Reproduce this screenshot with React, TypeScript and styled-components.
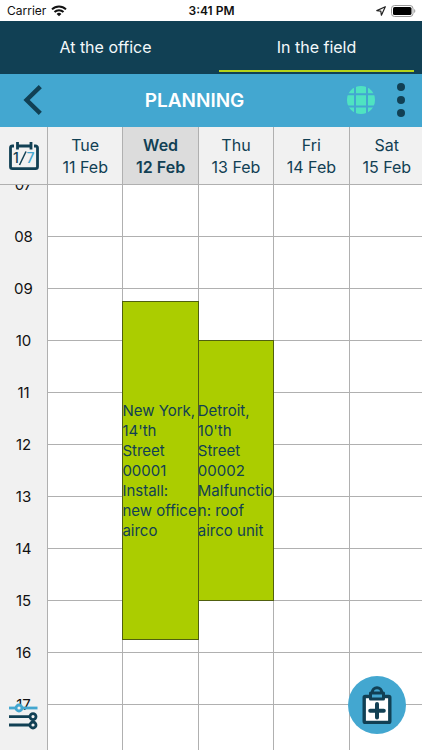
import React from "react";
import styled, { createGlobalStyle } from "styled-components";

const navy = "#114054";
const blue = "#43a7d0";
const lime = "#abcd00";
const mint = "#4fe3c1";
const line = "#b0b0b0";
const panel = "#f1f1f1";

const Global = createGlobalStyle`
  *, *::before, *::after { box-sizing: border-box; }
  body { margin: 0; font-family: Inter, "Liberation Sans", sans-serif; color: ${navy}; }
  button { border: 0; padding: 0; margin: 0; background: none; font: inherit; color: inherit; cursor: pointer; }
  svg { display: block; }
`;

const Screen = styled.div`
  position: relative;
  display: flex;
  flex-direction: column;
  height: 100vh;
  overflow: hidden;
  background: #fff;
`;

const StatusBar = styled.div`
  display: grid;
  grid-template-columns: 1fr auto 1fr;
  align-items: center;
  flex: none;
  height: 21px;
  padding: 0 6px 0 7px;
  color: #111;
  font-size: 12px;
  line-height: 20px;
`;

const StatusGroup = styled.div<{ $end?: boolean }>`
  display: flex;
  align-items: center;
  justify-content: ${(p) => (p.$end ? "flex-end" : "flex-start")};
  gap: 5px;
`;

const Clock = styled.time`
  font-weight: 600;
`;

const Tabs = styled.nav`
  display: grid;
  grid-template-columns: 1fr 1fr;
  flex: none;
  height: 53px;
  padding-bottom: 2px;
  background: ${navy};
`;

const Tab = styled.button<{ $active?: boolean }>`
  margin: 0 8px;
  padding-top: 2px;
  border-bottom: 2px solid ${(p) => (p.$active ? "#b5d31a" : "transparent")};
  color: #f4f9fb;
  font-size: 16px;
`;

const TitleBar = styled.header`
  display: grid;
  grid-template-columns: 1fr auto 1fr;
  align-items: center;
  flex: none;
  height: 53px;
  padding: 0 12px 1px 16px;
  background: ${blue};
`;

const Title = styled.h1`
  margin: 0;
  padding-right: 37px;
  color: #fff;
  font-size: 19px;
  font-weight: 600;
`;

const BackButton = styled.button`
  justify-self: start;
  display: grid;
  place-items: center;
  width: 34px;
  height: 40px;
`;

const Actions = styled.div`
  display: flex;
  justify-content: flex-end;
  align-items: center;
  gap: 17px;
`;

const Days = styled.div`
  display: grid;
  grid-template-columns: 47px repeat(5, 1fr);
  flex: none;
  height: 58px;
  margin-right: -2px;
  border-bottom: 1px solid ${line};
  background: ${panel};
`;

const RangeButton = styled.button`
  display: grid;
  place-items: center;
`;

const Day = styled.div<{ $today?: boolean }>`
  display: flex;
  flex-direction: column;
  justify-content: center;
  border-left: 1px solid ${line};
  background: ${(p) => (p.$today ? "#dcdcdc" : panel)};
  font-size: 16px;
  font-weight: ${(p) => (p.$today ? 600 : 400)};
  line-height: 22px;
  text-align: center;
  white-space: nowrap;
`;

const Schedule = styled.main`
  display: grid;
  grid-template-columns: 47px repeat(5, 1fr);
  flex: 1;
  min-height: 0;
  margin-right: -2px;
  overflow: hidden auto;
  scrollbar-width: none;
`;

const Axis = styled.div`
  background: ${panel};
`;

const AxisLabels = styled.div`
  margin-top: -26px;
`;

const HourLabel = styled.div`
  height: 52px;
  color: #111;
  font-size: 15px;
  line-height: 52px;
  text-align: center;
`;

/* One grid row is a quarter of an hour. */
const DayColumn = styled.div`
  display: grid;
  grid-template-columns: 100%;
  grid-auto-rows: 13px;
  border-left: 1px solid ${line};
`;

const HourCell = styled.div<{ $row: number }>`
  grid-column: 1;
  grid-row: ${(p) => p.$row} / span 4;
  border-bottom: 1px solid ${line};
`;

const Appointment = styled.article<{ $row: number; $span: number }>`
  z-index: 1;
  grid-column: 1;
  grid-row: ${(p) => p.$row} / span ${(p) => p.$span};
  display: flex;
  align-items: center;
  margin: -1px -1px 0;
  border: 1px solid #50600f;
  background: ${lime};
  font-size: 15px;
  line-height: 20px;
`;

const AppointmentText = styled.p`
  flex: 1;
  min-width: 0;
  margin: 0 -1px;
  overflow-wrap: anywhere;
`;

const FilterButton = styled.button`
  position: absolute;
  bottom: 19px;
  left: 8px;
`;

const AddButton = styled.button`
  position: absolute;
  right: 16px;
  bottom: 16px;
  display: grid;
  place-items: center;
  width: 58px;
  height: 58px;
  border-radius: 50%;
  background: ${blue};
`;

type Job = { start: number; quarters: number; text: string };

const days: { name: string; date: string; today?: boolean; jobs: Job[] }[] = [
  { name: "Tue", date: "11 Feb", jobs: [] },
  {
    name: "Wed",
    date: "12 Feb",
    today: true,
    jobs: [{ start: 9.25, quarters: 26, text: "New York, 14'th Street 00001 Install: new office airco" }],
  },
  {
    name: "Thu",
    date: "13 Feb",
    jobs: [{ start: 10, quarters: 20, text: "Detroit, 10'th Street 00002 Malfunction: roof airco unit" }],
  },
  { name: "Fri", date: "14 Feb", jobs: [] },
  { name: "Sat", date: "15 Feb", jobs: [] },
];

const firstHour = 7;
const hours = Array.from({ length: 17 }, (_, i) => firstHour + i);
const rowOf = (hour: number) => (hour - firstHour) * 4 + 1;

const WifiIcon = () => (
  <svg width="16" height="12" viewBox="0 0 16 12" fill="none" stroke="#111" strokeWidth="2">
    <path d="M1 4.4a10 10 0 0 1 14 0" />
    <path d="M3.5 7a6.4 6.4 0 0 1 9 0" />
    <path d="M8 11.3 5.6 8.9a3.4 3.4 0 0 1 4.8 0Z" fill="#111" stroke="none" />
  </svg>
);

const LocationIcon = () => (
  <svg width="10" height="10" viewBox="0 0 10 10" fill="none" stroke="#222" strokeWidth="1.2" strokeLinejoin="round">
    <path d="M9.3.7.8 4.6l4 .6.6 4Z" />
  </svg>
);

const BatteryIcon = () => (
  <svg width="25" height="12" viewBox="0 0 25 12">
    <rect x="0.5" y="0.5" width="21.5" height="11" rx="3" fill="none" stroke="#999" />
    <rect x="2" y="2" width="18.5" height="8" rx="1.6" fill="#000" />
    <path d="M23.2 4v4c1.5-.6 1.5-3.4 0-4Z" fill="#999" />
  </svg>
);

const BackIcon = () => (
  <svg width="20" height="30" viewBox="0 0 20 30" fill="none" stroke={navy} strokeWidth="4.4">
    <path d="M17.3 1.6 3.6 15l13.7 13.4" />
  </svg>
);

const GlobeIcon = () => (
  <svg width="28" height="28" viewBox="0 0 28 28">
    <circle cx="14" cy="14" r="14" fill={mint} />
    <path d="M8 0v28M20 0v28M0 8.3h28M0 20.4h28" stroke={blue} strokeWidth="2" />
  </svg>
);

const MoreIcon = () => (
  <svg width="18" height="36" viewBox="0 0 18 36" fill={navy}>
    <circle cx="9" cy="5" r="4" />
    <circle cx="9" cy="18" r="4" />
    <circle cx="9" cy="31" r="4" />
  </svg>
);

const RangeIcon = () => (
  <svg width="30" height="30" viewBox="0 0 30 30" fill="none" stroke={navy}>
    <path d="M5 5H3.4A1.9 1.9 0 0 0 1.5 6.8v19c0 1 .8 1.8 1.9 1.8h23.2c1 0 1.9-.8 1.9-1.8v-19c0-1-.8-1.8-1.9-1.8H25M9 5h12" strokeWidth="2.8" />
    <path d="M8.500 1v7.500M22 1v7.500" strokeWidth="2.8" />
    <g stroke="none" fontSize="14" fontWeight="500" fill={navy}>
      <text x="4" y="22">1</text>
      <text x="17.5" y="22" fill={blue}>7</text>
    </g>
    <path d="M10.5 24 17 10.5" strokeWidth="1.5" />
  </svg>
);

const FilterIcon = () => (
  <svg width="30" height="30" viewBox="0 0 30 30" fill={panel} strokeWidth="2.8">
    <g stroke={blue}>
      <path d="M1 7h28.5" />
      <circle cx="11" cy="7" r="3" />
    </g>
    <g stroke={navy}>
      <path d="M1 15.6h23M1 24h23" />
      <circle cx="25" cy="15.6" r="3" />
      <circle cx="25" cy="24" r="3" />
    </g>
  </svg>
);

const ClipboardIcon = () => (
  <svg width="30" height="38" viewBox="0 0 30 38" stroke={navy} strokeWidth="3.4" strokeLinejoin="round">
    <rect x="2.2" y="10.5" width="25.6" height="26" rx="1" fill="#fff" />
    <path d="M10.3 7.5v-1a4.7 4.7 0 0 1 9.4 0v1" fill={blue} strokeWidth="3" />
    <rect x="8.5" y="7" width="13" height="6" fill={blue} strokeWidth="3" />
    <path d="M15 18v13.500M8.200 24.700h13.600" fill="none" strokeWidth="4" strokeLinecap="round" />
  </svg>
);

export default function App() {
  return (
    <Screen>
      <Global />
      <StatusBar>
        <StatusGroup>
          Carrier <WifiIcon />
        </StatusGroup>
        <Clock>3:41 PM</Clock>
        <StatusGroup $end>
          <LocationIcon />
          <BatteryIcon />
        </StatusGroup>
      </StatusBar>
      <Tabs>
        <Tab>At the office</Tab>
        <Tab $active aria-current="page">In the field</Tab>
      </Tabs>
      <TitleBar>
        <BackButton aria-label="Back"><BackIcon /></BackButton>
        <Title>PLANNING</Title>
        <Actions>
          <button aria-label="Map"><GlobeIcon /></button>
          <button aria-label="More"><MoreIcon /></button>
        </Actions>
      </TitleBar>
      <Days>
        <RangeButton aria-label="Change range"><RangeIcon /></RangeButton>
        {days.map((d) => (
          <Day key={d.date} $today={d.today}>
            <span>{d.name}</span>
            <span>{d.date}</span>
          </Day>
        ))}
      </Days>
      <Schedule>
        <Axis>
          <AxisLabels>
            {hours.map((h) => (
              <HourLabel key={h}>{String(h).padStart(2, "0")}</HourLabel>
            ))}
          </AxisLabels>
        </Axis>
        {days.map((d) => (
          <DayColumn key={d.date}>
            {hours.map((h) => (
              <HourCell key={h} $row={rowOf(h)} />
            ))}
            {d.jobs.map((j) => (
              <Appointment key={j.text} $row={rowOf(j.start)} $span={j.quarters}>
                <AppointmentText>{j.text}</AppointmentText>
              </Appointment>
            ))}
          </DayColumn>
        ))}
      </Schedule>
      <FilterButton aria-label="Filter"><FilterIcon /></FilterButton>
      <AddButton aria-label="Add job"><ClipboardIcon /></AddButton>
    </Screen>
  );
}
